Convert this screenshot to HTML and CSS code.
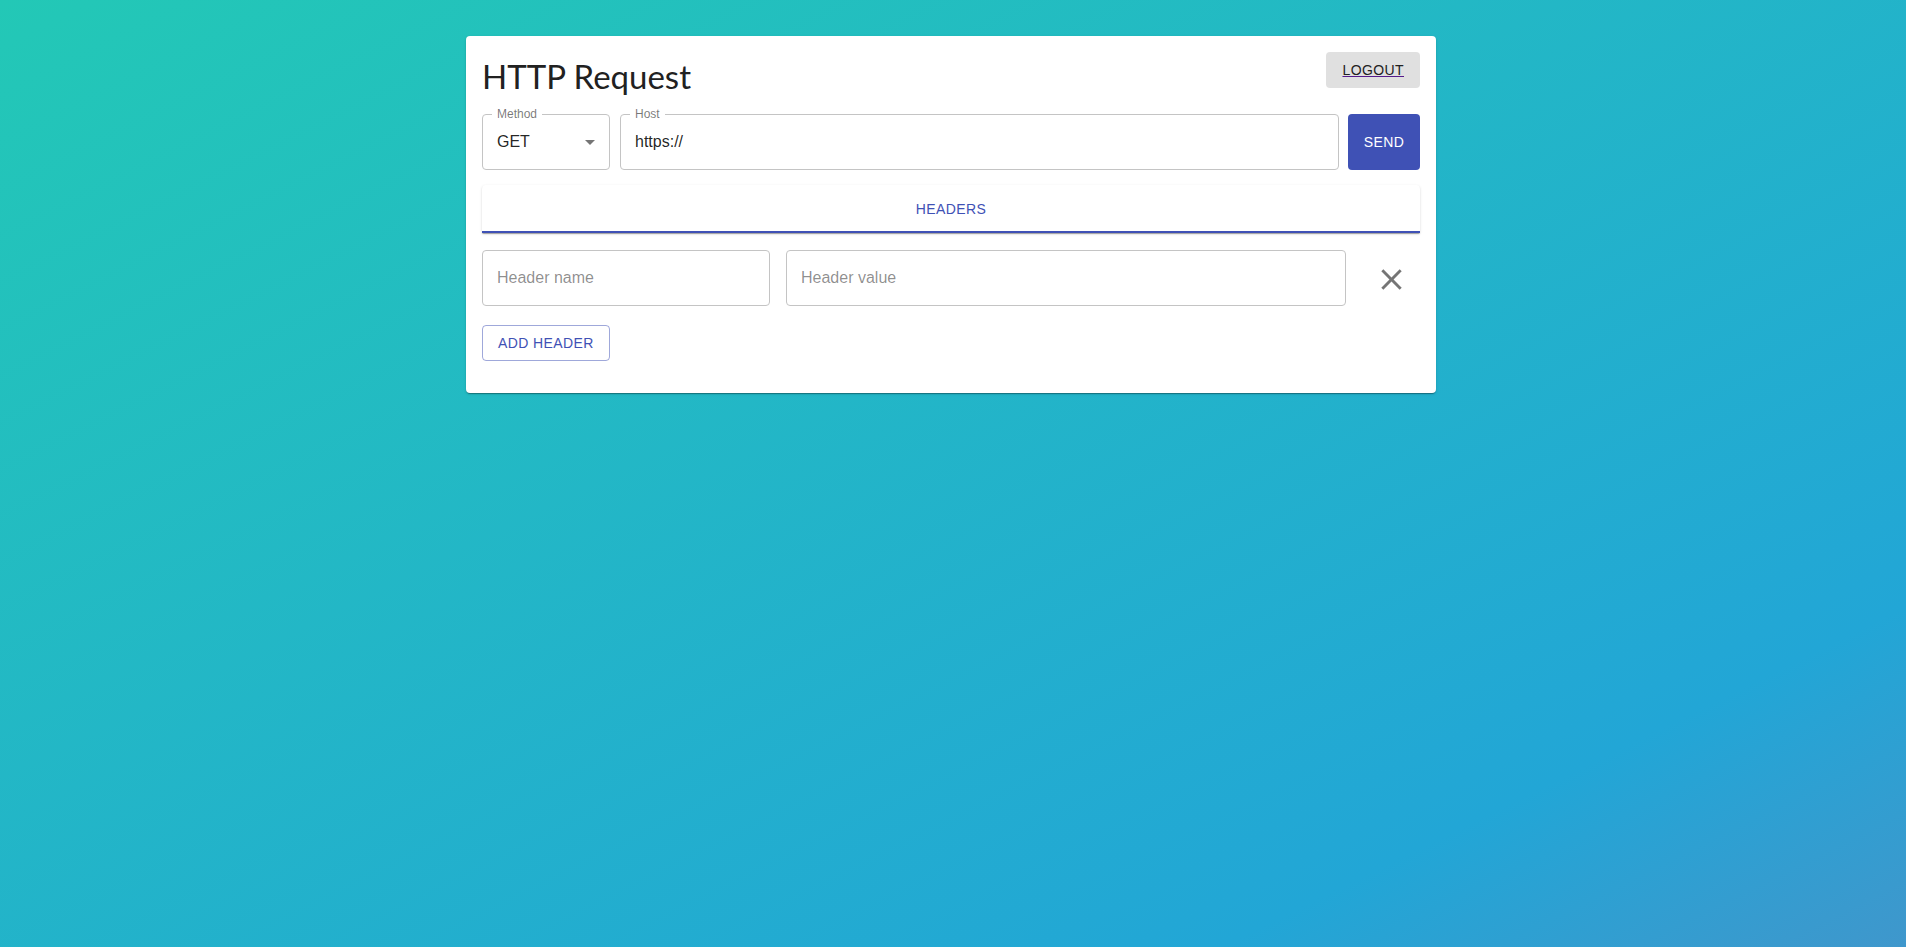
FILE: index.html
```html
<!DOCTYPE html>
<html lang="en">
<head>
<meta charset="utf-8">
<title>HTTP Request</title>
<link rel="stylesheet" href="styles.css">
</head>
<body>
<div class="page">
  <main class="card">
    <div class="card-head">
      <h1 class="title">HTTP Request</h1>
      <button class="btn btn-logout" type="button"><a class="logout-link" href="#">LOGOUT</a></button>
    </div>

    <div class="request-row">
      <div class="field field-method">
        <span class="field-label">Method</span>
        <span class="field-value">GET</span>
        <svg class="select-arrow" viewBox="0 0 24 24" width="24" height="24"><path d="M7 10l5 5 5-5z"/></svg>
      </div>
      <div class="field field-host">
        <span class="field-label">Host</span>
        <span class="field-value">https://</span>
      </div>
      <button class="btn btn-send" type="button">SEND</button>
    </div>

    <div class="tabs">
      <div class="tab tab-active">HEADERS</div>
    </div>

    <div class="header-row">
      <div class="field"><span class="placeholder">Header name</span></div>
      <div class="field"><span class="placeholder">Header value</span></div>
      <button class="icon-btn" type="button" aria-label="Remove header">
        <svg viewBox="0 0 24 24" width="35" height="35"><path d="M19 6.41L17.59 5 12 10.59 6.41 5 5 6.41 10.59 12 5 17.59 6.41 19 12 13.41 17.59 19 19 17.59 13.41 12z"/></svg>
      </button>
    </div>

    <div class="actions">
      <button class="btn btn-outlined" type="button">ADD HEADER</button>
    </div>
  </main>
</div>
</body>
</html>
```

FILE: styles.css
```css
html, body {
  margin: 0;
  height: 100%;
}

body {
  background: linear-gradient(to bottom right, #23c8b6 0%, #22a6d6 82%, #3f97cc 100%);
  font-family: "Liberation Sans", Arial, sans-serif;
  color: rgba(0, 0, 0, 0.87);
}

.page {
  display: flex;
  justify-content: center;
  padding: 36px 4px 0 0;
}

.card {
  width: 970px;
  box-sizing: border-box;
  background: #fff;
  border-radius: 4px;
  padding: 16px 16px 32px;
  box-shadow: 0 2px 1px -1px rgba(0,0,0,0.2), 0 1px 1px 0 rgba(0,0,0,0.14), 0 1px 3px 0 rgba(0,0,0,0.12);
}

.card-head {
  display: flex;
  justify-content: space-between;
  align-items: flex-start;
}

.title {
  margin: 3px 0 0;
  font-family: "Lato", "Noto Sans", sans-serif;
  font-weight: 400;
  font-size: 33px;
  line-height: 42px;
  color: #212121;
}

.btn {
  border: 0;
  border-radius: 4px;
  font-family: "Liberation Sans", Arial, sans-serif;
  font-size: 14px;
  letter-spacing: 0.4px;
  text-transform: uppercase;
  cursor: pointer;
  padding: 0 16px;
  line-height: 16px;
}

.btn-logout {
  height: 36px;
  background: #e0e0e0;
  color: rgba(0, 0, 0, 0.87);
}

.logout-link {
  color: #222;
  text-decoration: underline;
  text-decoration-color: #551a8b;
}

.request-row {
  display: flex;
  margin-top: 17px;
}

.field {
  position: relative;
  box-sizing: border-box;
  height: 56px;
  border: 1px solid #c4c4c4;
  border-radius: 4px;
  display: flex;
  align-items: center;
  padding: 0 14px;
  font-size: 16px;
  background: #fff;
}

.field-method {
  width: 128px;
  margin-right: 10px;
}

.field-host {
  flex: 1;
  margin-right: 9px;
}

.field-label {
  position: absolute;
  top: -7px;
  left: 9px;
  padding: 0 5px;
  background: #fff;
  font-size: 12px;
  line-height: 12px;
  color: rgba(0, 0, 0, 0.54);
}

.field-value {
  color: rgba(0, 0, 0, 0.87);
}

.select-arrow {
  position: absolute;
  right: 7px;
  top: 15px;
  fill: rgba(0, 0, 0, 0.54);
}

.btn-send {
  width: 72px;
  height: 56px;
  padding: 0;
  background: #3f51b5;
  color: #fff;
}

.tabs {
  margin-top: 15px;
  height: 48px;
  box-sizing: border-box;
  display: flex;
  background: #fff;
  border-radius: 4px 4px 0 0;
  box-shadow: 0 2px 1px -1px rgba(0,0,0,0.2), 0 1px 1px 0 rgba(0,0,0,0.14), 0 1px 3px 0 rgba(0,0,0,0.12);
}

.tab {
  flex: 1;
  display: flex;
  align-items: center;
  justify-content: center;
  font-size: 14px;
  letter-spacing: 0.4px;
  text-transform: uppercase;
  color: #3f51b5;
}

.tab-active {
  border-bottom: 2px solid #3f51b5;
  padding-top: 2px;
}

.header-row {
  display: grid;
  grid-template-columns: 288px 1fr 58px;
  column-gap: 16px;
  align-items: center;
  margin-top: 17px;
}

.placeholder {
  color: rgba(0, 0, 0, 0.45);
}

.icon-btn {
  border: 0;
  background: transparent;
  padding: 3px 0 0;
  width: 58px;
  height: 56px;
  box-sizing: border-box;
  display: flex;
  align-items: center;
  justify-content: center;
  cursor: pointer;
}

.icon-btn svg {
  fill: rgba(0, 0, 0, 0.54);
}

.actions {
  margin-top: 19px;
  display: flex;
}

.btn-outlined {
  height: 36px;
  padding: 0 15px;
  background: transparent;
  border: 1px solid rgba(63, 81, 181, 0.5);
  color: #3f51b5;
}
```
